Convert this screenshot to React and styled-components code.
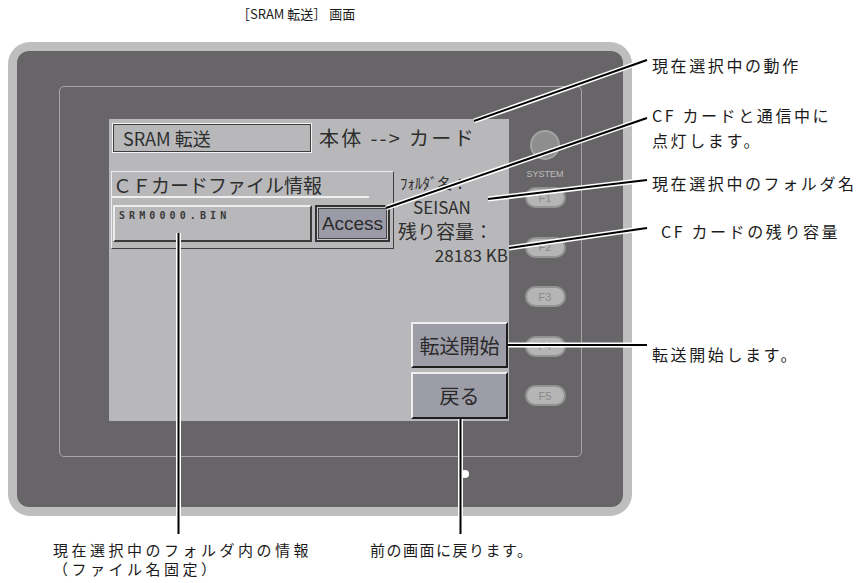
import React from 'react';
import styled, { createGlobalStyle } from 'styled-components';

const GlobalStyle = createGlobalStyle`
  body {
    margin: 0;
    background: #fff;
    font-family: "Noto Sans CJK JP", "Liberation Sans", sans-serif;
    color: #1a1a1a;
  }
`;

const Page = styled.div`
  position: relative;
  width: 865px;
  height: 583px;
  overflow: hidden;
`;

const Caption = styled.div`
  height: 42px;
  box-sizing: border-box;
  padding: 5px 0 0 237px;
  font-size: 13px;
  line-height: 18px;
`;

const Main = styled.div`
  display: flex;
  align-items: flex-start;
`;

const Device = styled.div`
  margin-left: 8px;
  width: 624px;
  height: 474px;
  box-sizing: border-box;
  padding: 9px;
  background: #bebebe;
  border-radius: 22px;
`;

const Housing = styled.div`
  height: 100%;
  box-sizing: border-box;
  padding: 35px 0 0 42px;
  background: #676568;
  border-radius: 12px;
`;

const Bezel = styled.div`
  display: flex;
  align-items: flex-start;
  width: 523px;
  height: 371px;
  box-sizing: border-box;
  padding: 32px 0 0 49px;
  border: 1px solid #a6a6a6;
  border-radius: 5px;
`;

const Screen = styled.div`
  display: flex;
  flex-direction: column;
  width: 400px;
  height: 302px;
  box-sizing: border-box;
  padding: 4px 1px 2px 3px;
  background: #b8b8ba;
  color: #2e2e2e;
`;

const Header = styled.div`
  display: flex;
  align-items: center;
  height: 30px;
`;

const SramBox = styled.div`
  width: 200px;
  height: 30px;
  box-sizing: border-box;
  padding-left: 10px;
  border: 1px solid #f4f4f4;
  box-shadow: inset 0 0 0 1px #3c3c3c;
  font-size: 18px;
  line-height: 28px;
`;

const Mode = styled.div`
  margin-left: 7px;
  font-size: 20px;
  letter-spacing: 2.3px;
  line-height: 28px;
`;

const Middle = styled.div`
  display: flex;
  margin: 18px 0 0 -1px;
`;

const Panel = styled.div`
  width: 283px;
  height: 78px;
  box-sizing: border-box;
  border: 1px solid;
  border-color: #ececec #404040 #404040 #ececec;
`;

const PanelTitle = styled.div`
  width: 256px;
  height: 24px;
  padding-left: 1px;
  border-bottom: 2px solid #f0f0f0;
  font-size: 19px;
  line-height: 25px;
  letter-spacing: 0;
  white-space: nowrap;
`;

const FileRow = styled.div`
  display: flex;
  gap: 3px;
  margin-top: 7px;
  padding-left: 1px;
`;

const FileBox = styled.div`
  width: 199px;
  height: 37px;
  box-sizing: border-box;
  padding: 3px 0 0 4px;
  border: 2px solid;
  border-color: #ededed #3a3a3a #3a3a3a #ededed;
  font-family: "DejaVu Sans Mono", "Liberation Mono", monospace;
  font-weight: bold;
  font-size: 10px;
  line-height: 12px;
  letter-spacing: 4.1px;
  color: #3a3a3a;
`;

const AccessButton = styled.div`
  display: flex;
  align-items: center;
  justify-content: center;
  width: 75px;
  height: 37px;
  box-sizing: border-box;
  border: 2px solid #333;
  box-shadow: inset 0 0 0 1px #c8c8c8, inset 0 0 0 2px #444;
  background: #9b9ba7;
  font-family: "Liberation Sans", sans-serif;
  font-size: 19px;
  color: #2a2a2a;
`;

const Info = styled.div`
  display: flex;
  flex-direction: column;
  flex: 1;
  margin-left: 4px;
`;

const InfoLine = styled.div`
  margin-top: ${(p) => p.$top}px;
  margin-left: ${(p) => p.$left || 0}px;
  font-size: ${(p) => p.$size}px;
  line-height: ${(p) => p.$size + 2}px;
  text-align: ${(p) => (p.$right ? 'right' : 'left')};
  white-space: nowrap;
`;

const ButtonStack = styled.div`
  display: flex;
  flex-direction: column;
  gap: 4px;
  margin-top: auto;
  align-self: flex-end;
`;

const ScreenButton = styled.div`
  display: flex;
  align-items: center;
  justify-content: center;
  width: 97px;
  height: ${(p) => p.$h}px;
  box-sizing: border-box;
  border: 2px solid;
  border-color: #efefef #1e1e1e #1e1e1e #efefef;
  background: #9d9da8;
  font-size: 20px;
  color: #2a2a2a;
`;

const Keys = styled.div`
  display: flex;
  flex-direction: column;
  align-items: center;
  width: 42px;
  margin-left: 15px;
  padding-top: 11px;
`;

const SystemLamp = styled.div`
  width: 30px;
  height: 30px;
  box-sizing: border-box;
  border-radius: 50%;
  border: 2px solid #a4a4a4;
  background: #8e8e8e;
`;

const SystemLabel = styled.div`
  margin: 9px 0 8px;
  font-family: "Liberation Sans", sans-serif;
  font-size: 9px;
  line-height: 10px;
  color: #bdbdbd;
`;

const KeyPill = styled.div`
  display: flex;
  align-items: center;
  justify-content: center;
  width: 41px;
  height: 21px;
  margin-bottom: 28.5px;
  box-sizing: border-box;
  border: 2px solid #939393;
  border-radius: 11px;
  background: #b5b5b5;
  font-family: "Liberation Sans", sans-serif;
  font-size: 11px;
  color: #8a8a8a;
`;

const Notes = styled.div`
  display: flex;
  flex-direction: column;
  margin-left: 20px;
`;

const Note = styled.div`
  margin-top: ${(p) => p.$top}px;
  margin-left: ${(p) => p.$left || 0}px;
  font-size: 16px;
  line-height: ${(p) => p.$lh || 20}px;
  letter-spacing: 2.6px;
  white-space: nowrap;
`;

const BottomNotes = styled.div`
  display: flex;
  margin-top: 24px;
  padding-left: 53px;
`;

const BottomNote = styled.div`
  width: ${(p) => p.$w}px;
  font-size: 15px;
  line-height: 19px;
  letter-spacing: ${(p) => p.$ls}px;
  white-space: nowrap;
`;

const Leaders = styled.svg`
  position: absolute;
  top: 0;
  left: 0;
  pointer-events: none;
`;

const leaderLines = [
  [647, 60, 474, 121],
  [647, 118, 386, 208],
  [647, 180, 488, 199],
  [647, 228, 509, 248],
  [508, 345, 647, 345],
  [178.5, 233, 178.5, 534],
  [460.5, 419, 460.5, 534],
];

const keys = ['F1', 'F2', 'F3', 'F4', 'F5'];

export default function App() {
  return (
    <Page>
      <GlobalStyle />
      <Caption>［SRAM 転送］ 画面</Caption>
      <Main>
        <Device>
          <Housing>
            <Bezel>
              <Screen>
                <Header>
                  <SramBox>SRAM 転送</SramBox>
                  <Mode>本体 --&gt; カード</Mode>
                </Header>
                <Middle>
                  <Panel>
                    <PanelTitle>ＣＦカードファイル情報</PanelTitle>
                    <FileRow>
                      <FileBox>SRM0000.BIN</FileBox>
                      <AccessButton>Access</AccessButton>
                    </FileRow>
                  </Panel>
                  <Info>
                    <InfoLine $top={3} $left={2} $size={15}>ﾌｫﾙﾀﾞ名：</InfoLine>
                    <InfoLine $top={6} $left={15} $size={17}>SEISAN</InfoLine>
                    <InfoLine $top={4} $size={19}>残り容量：</InfoLine>
                    <InfoLine $top={4} $size={17} $right>28183 KB</InfoLine>
                  </Info>
                </Middle>
                <ButtonStack>
                  <ScreenButton $h={46}>転送開始</ScreenButton>
                  <ScreenButton $h={47}>戻る</ScreenButton>
                </ButtonStack>
              </Screen>
              <Keys>
                <SystemLamp />
                <SystemLabel>SYSTEM</SystemLabel>
                {keys.map((k) => (
                  <KeyPill key={k}>{k}</KeyPill>
                ))}
              </Keys>
            </Bezel>
          </Housing>
        </Device>
        <Notes>
          <Note $top={13}>現在選択中の動作</Note>
          <Note $top={28} $lh={25}>
            CF カードと通信中に
            <br />
            点灯します。
          </Note>
          <Note $top={20}>現在選択中のフォルダ名</Note>
          <Note $top={28} $left={9}>CF カードの残り容量</Note>
          <Note $top={103}>転送開始します。</Note>
        </Notes>
      </Main>
      <BottomNotes>
        <BottomNote $w={317} $ls={3.5}>
          現在選択中のフォルダ内の情報
          <br />
          （ファイル名固定）
        </BottomNote>
        <BottomNote $w={200} $ls={1.5}>前の画面に戻ります。</BottomNote>
      </BottomNotes>
      <Leaders width="865" height="583" viewBox="0 0 865 583">
        <circle cx="465" cy="474" r="4" fill="#fff" />
        {leaderLines.map(([x1, y1, x2, y2], i) => (
          <line key={`h${i}`} x1={x1} y1={y1} x2={x2} y2={y2} stroke="#fff" strokeWidth="5" />
        ))}
        {leaderLines.map(([x1, y1, x2, y2], i) => (
          <line key={`l${i}`} x1={x1} y1={y1} x2={x2} y2={y2} stroke="#000" strokeWidth="2" />
        ))}
      </Leaders>
    </Page>
  );
}
